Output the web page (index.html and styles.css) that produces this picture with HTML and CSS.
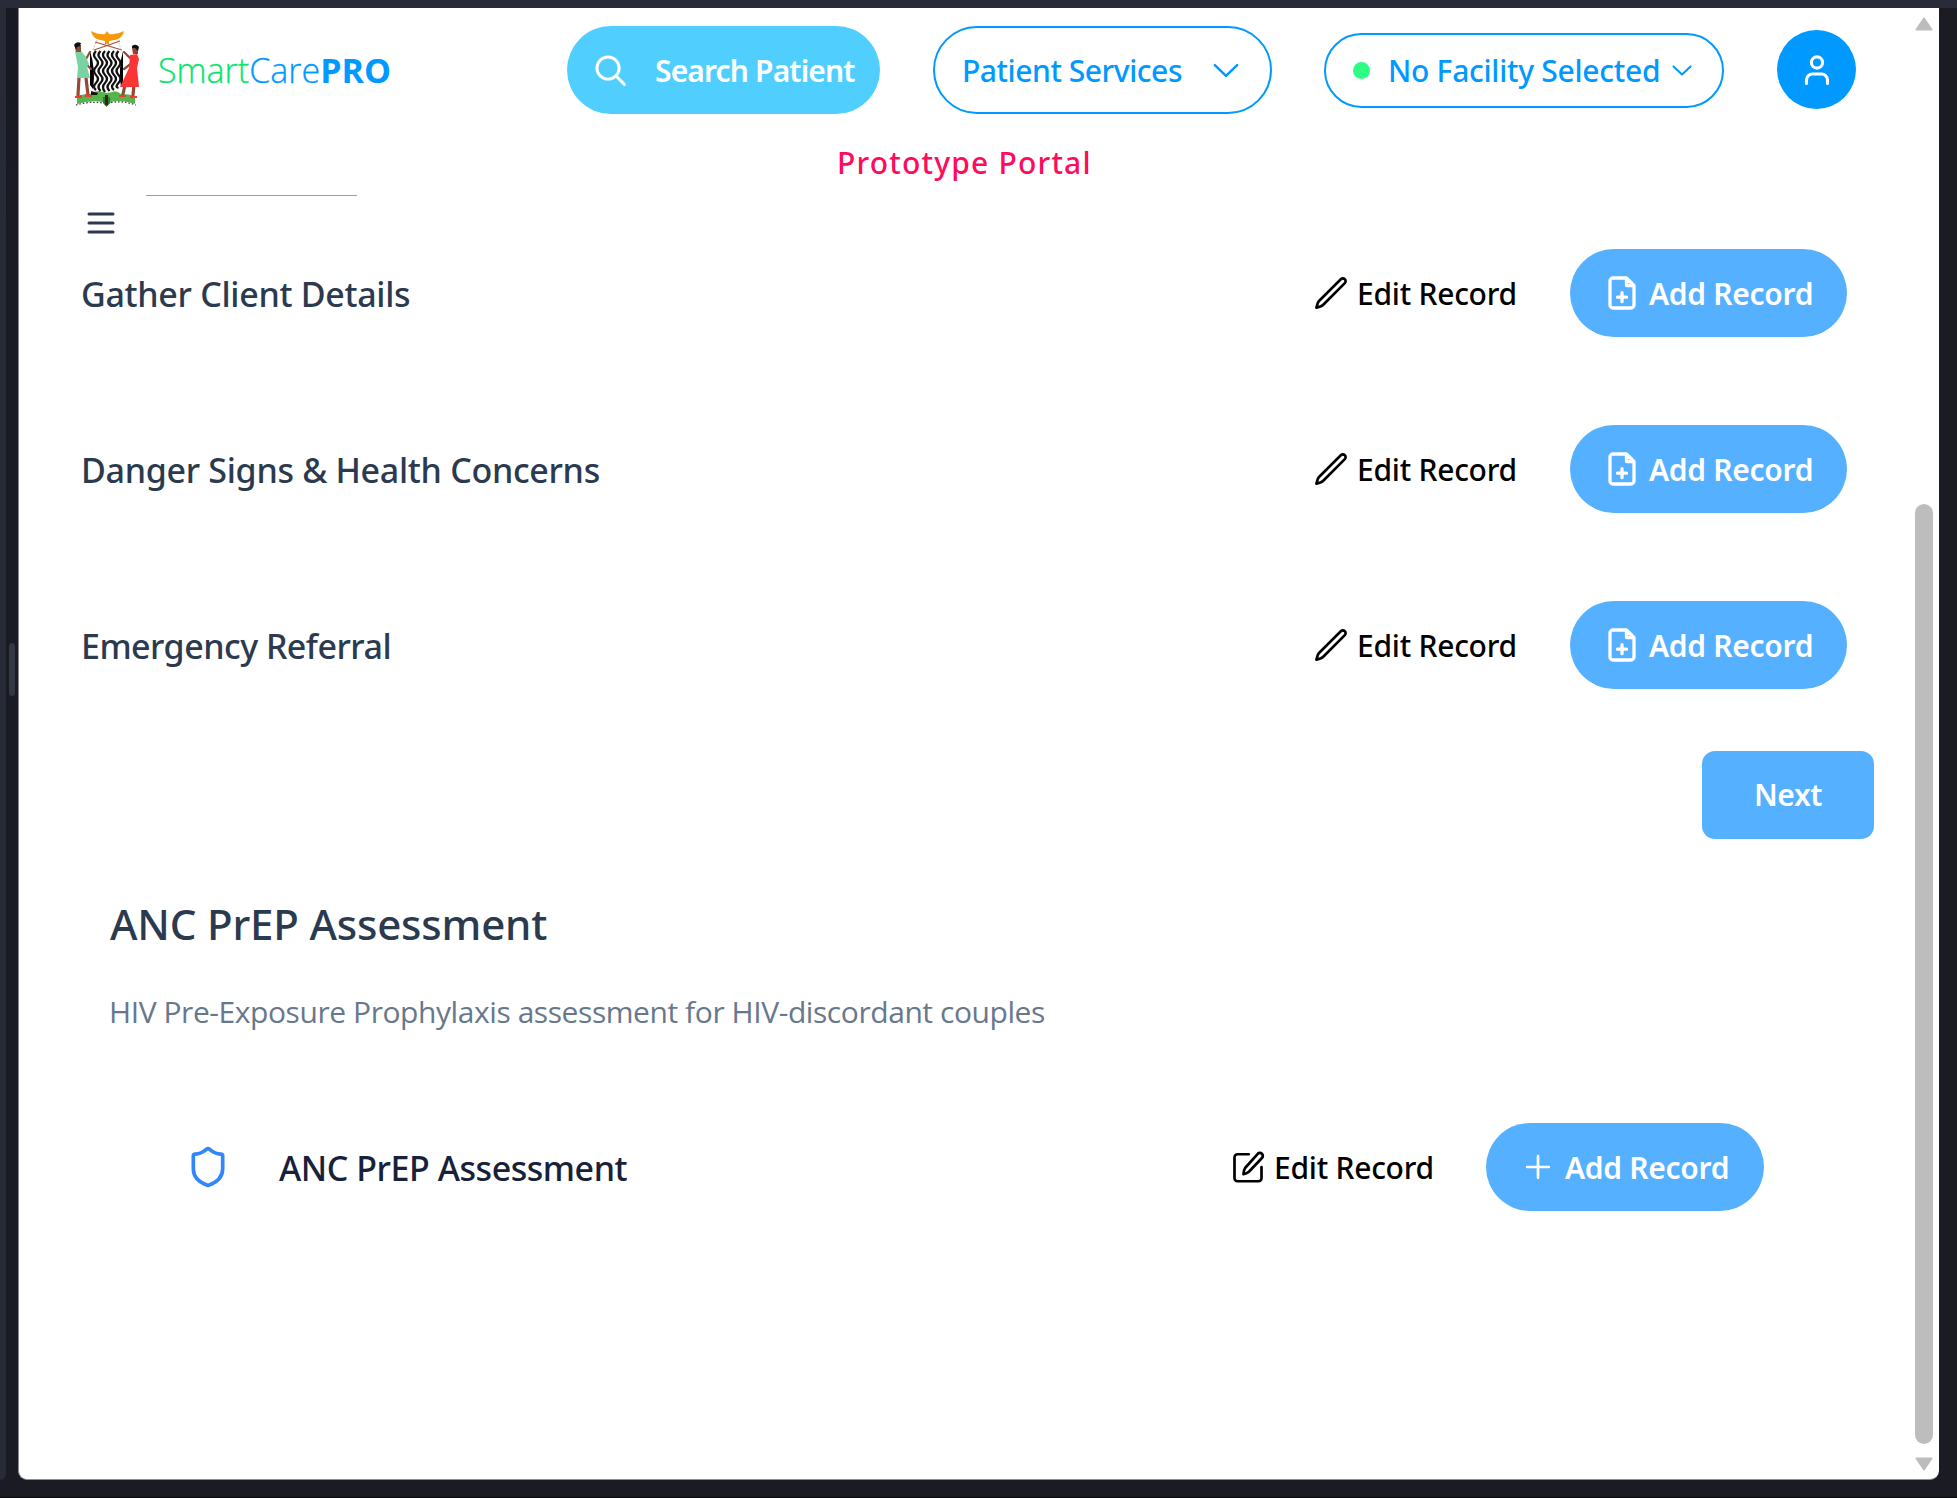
FILE: index.html
```
<!DOCTYPE html>
<html lang="en">
<head>
<meta charset="utf-8">
<title>SmartCarePRO</title>
<link rel="stylesheet" href="styles.css">
</head>
<body>
<svg class="defs" aria-hidden="true">
  <symbol id="pencil" viewBox="0 0 24 24"><path d="M16.862 4.487l1.687-1.688a1.875 1.875 0 1 1 2.652 2.652L6.832 19.82a4.5 4.5 0 0 1-1.897 1.13l-2.685.8.8-2.685a4.5 4.5 0 0 1 1.13-1.897z"/></symbol>
  <symbol id="file-plus" viewBox="0 0 24 24"><path d="M15 2H6a2 2 0 0 0-2 2v16a2 2 0 0 0 2 2h12a2 2 0 0 0 2-2V7zM15 2v5h5M9 14.8h6M12 11.8v6"/></symbol>
  <symbol id="chevron" viewBox="0 0 24 16"><path d="M1.5 3l10.500 10L22.500 3"/></symbol>
</svg>
<div class="window">
  <aside class="rail"></aside>
  <div class="gutter"><span class="grip"></span></div>
  <div class="panel">
    <main class="page">
      <header class="topbar">
        <div class="brand">
          <svg class="emblem" viewBox="13 10 67 78">
            <path fill="#55b44c" d="M17 76q7-2 13-2 6-4 16-3 10-1 15 3 8 0 14 2v8q-14-4-24-2l-4 4-4-4q-13-2-26 2z"/>
            <path fill="none" stroke="#fff" stroke-width="2" d="M17 85.500q13-4 26-2M51 83q13-2 24 2"/>
            <path fill="none" stroke="#333" stroke-width="1.200" stroke-dasharray="1.500 2" d="M16 85q13-4 27-2M51 82.500q13-2 25 2.500"/>
            <path fill="#2e7d32" d="M43 77h7v6l-3.500 4-3.500-4z"/>
            <path fill="#3a2416" d="M45 75h3v10h-3z"/>
            <path fill="none" stroke="#a5523a" stroke-width="1.200" d="M35 22l27 8M60 21l-26 9"/>
            <path fill="none" stroke="#999" stroke-width=".7" stroke-dasharray="1.500 1.500" d="M61 30l-3-10M33 30l4-10"/>
            <path fill="#fff" d="M30 31h33v35q-6 6-16.500 7Q36 71 30 66z"/>
            <path d="M30 31q6 18 3 38l-3-4zM63 31q-5 18-2 36l2-3z"/>
            <g fill="none" stroke="#111" stroke-width="2.300">
              <path d="M36 31q-4 4 0 8t0 8 0 8 0 8 0 7M40.500 31q-4 4 0 8t0 8 0 8 0 8 0 8M45 31q-4 4 0 8t0 8 0 8 0 8 0 9M49.500 31q-4 4 0 8t0 8 0 8 0 8 0 8M54 31q-4 4 0 8t0 8 0 8 0 8 0 7M58.500 31q-4 4 0 8t0 8 0 8 0 8 0 5"/>
            </g>
            <path fill="#f59a0b" d="M31 11q8 4 14 3l2-3 2 3q8 1 15-3-1 7-9 9l-6 1v3h-4v-3l-5-1q-8-2-9-9z"/>
            <g fill="none" stroke="#924a35" stroke-width="3.200" stroke-linecap="round">
              <path d="M19 58l-1 17M26 58l2 17M65 65l-2 9M74 65l-1 10"/>
              <path stroke-width="2.200" d="M24 42l7 7M26 39l4-7M72 43l-8 6M70 38l-6-6"/>
            </g>
            <path fill="#78d2a4" d="M15 31h6l5 6 3 7-2 3 3 11H17l1-11z"/>
            <path fill="#fb3434" d="M70 35l7-1 2 5-2 9 2 19H60l9-19zM15 76l7-1v3h-7zM25 74l7 1v2h-7zM59 75h7v2h-7zM70 76h7v2h-7z"/>
            <path fill="#8b4935" d="M15 25h6v7h-5zM72 28h6v6h-5z"/>
            <path fill="#111" d="M14 25q2-4 7-2l-1 3-3 1-1 3zM72 26q4-3 7 1l-1 4-3-3h-3zM31 71l7 2-1 2h-6z"/>
          </svg>
          <span class="name"><span class="smart">Smart</span><span class="care">Care</span><b>PRO</b></span>
        </div>
        <a class="search"><svg class="ico s35" viewBox="0 0 24 24"><circle cx="10.300" cy="10.300" r="7.600"/><path d="M16 16l5.500 5.500"/></svg><span>Search Patient</span></a>
        <a class="pill services"><span>Patient Services</span><svg class="ico chev"><use href="#chevron"/></svg></a>
        <a class="pill facility"><i class="dot"></i><span>No Facility Selected</span><svg class="ico chev-sm"><use href="#chevron"/></svg></a>
        <a class="avatar"><svg class="ico user" viewBox="0 0 26 32"><circle cx="13" cy="8.500" r="5.600"/><path d="M2.500 29.500v-3.500a6 6 0 0 1 6-6h9a6 6 0 0 1 6 6v3.500"/></svg></a>
      </header>
      <p class="prototype">Prototype Portal</p>
      <div class="tabline"></div>
      <svg class="ico s36 menu" viewBox="0 0 24 24"><path d="M4 6h16M4 12h16M4 18h16"/></svg>

      <section class="rows">
        <div class="row"><h3>Gather Client Details</h3>
          <a class="edit"><svg class="ico s36"><use href="#pencil"/></svg><span>Edit Record</span></a>
          <a class="add"><svg class="ico s36 w2"><use href="#file-plus"/></svg><span>Add Record</span></a></div>
        <div class="row"><h3>Danger Signs &amp; Health Concerns</h3>
          <a class="edit"><svg class="ico s36"><use href="#pencil"/></svg><span>Edit Record</span></a>
          <a class="add"><svg class="ico s36 w2"><use href="#file-plus"/></svg><span>Add Record</span></a></div>
        <div class="row"><h3 class="tight">Emergency Referral</h3>
          <a class="edit"><svg class="ico s36"><use href="#pencil"/></svg><span>Edit Record</span></a>
          <a class="add"><svg class="ico s36 w2"><use href="#file-plus"/></svg><span>Add Record</span></a></div>
      </section>
      <a class="next">Next</a>

      <section class="assessment">
        <h2>ANC PrEP Assessment</h2>
        <p>HIV Pre-Exposure Prophylaxis assessment for HIV-discordant couples</p>
        <div class="row inner">
          <svg class="ico shield" viewBox="0 0 24 24"><path d="M20 13c0 5-3.500 7.500-7.660 8.950a1 1 0 0 1-.67-.01C7.500 20.500 4 18 4 13V6a1 1 0 0 1 1-1c2 0 4.500-1.200 6.240-2.720a1.170 1.170 0 0 1 1.520 0C14.510 3.810 17 5 19 5a1 1 0 0 1 1 1z"/></svg>
          <h3>ANC PrEP Assessment</h3>
          <a class="edit"><svg class="ico s36 bold" viewBox="0 0 24 24"><path d="M12.500 3.500H5a2 2 0 0 0-2 2v14a2 2 0 0 0 2 2h14a2 2 0 0 0 2-2V12M18.500 3.200a1.950 1.950 0 0 1 2.800 2.800l-8.700 9.200q-1.500 1.300-3.600 1.500-.1-2.300 1.200-4.200z"/></svg><span>Edit Record</span></a>
          <a class="add"><svg class="ico s36 bold" viewBox="0 0 24 24"><path d="M12 4.800v14.400M4.800 12h14.400"/></svg><span>Add Record</span></a>
        </div>
      </section>
    </main>
    <div class="scrollbar">
      <svg class="arrow" viewBox="0 0 18 14"><path d="M9 1.500L16.500 12.500h-15z"/></svg>
      <div class="thumb"></div>
      <svg class="arrow" viewBox="0 0 18 14"><path d="M9 12.500L16.500 1.500h-15z"/></svg>
    </div>
  </div>
</div>
</body>
</html>
```
FILE: styles.css
```
* { box-sizing: border-box; }
body { margin: 0; background: #1b1b24; font-family: "Noto Sans", "Segoe UI", sans-serif; }
h2, h3, p { margin: 0; font-weight: 500; }
span, h2, h3, p { white-space: nowrap; }
.defs { display: none; }

.window { display: flex; height: 1498px; padding-bottom: 17px; border-top: 8px solid #2a2b38; border-bottom: 1px solid #08080c; }
.rail { width: 6px; background: #272a37; border-radius: 0 0 8px 0; }
.gutter { width: 12px; display: flex; padding: 635px 0 0 3px; background: linear-gradient(#171a22, #1b1b24 260px); }
.grip { width: 6px; height: 53px; border-radius: 3px; background: #343744; }
.panel { width: 1921px; display: flex; background: #fff; border-left: 1px solid #8c8c92; border-bottom: 1px solid #8c8c92; border-radius: 0 0 9px 9px; }
.page { width: 1896px; display: flex; flex-direction: column; }

.ico { flex: none; fill: none; stroke: currentColor; stroke-width: 1.75; stroke-linecap: round; stroke-linejoin: round; }
.s35 { width: 35px; height: 35px; stroke-width: 2; }
.s36 { width: 36px; height: 36px; }
.w2 { stroke-width: 2.2; }
.bold { stroke-width: 1.8; }

.topbar { display: flex; align-items: center; height: 88px; margin: 18px 0 0 54px; color: #0099ff; font-size: 30px; font-weight: 500; }
.brand { width: 494px; display: flex; align-items: center; }
.emblem { width: 67px; height: 78px; margin-top: -2px; }
.name { margin-left: 18px; font: 300 34px "Open Sans", sans-serif; line-height: 46px; -webkit-text-stroke: 0.3px; }
.name b { font-weight: 700; -webkit-text-stroke: 0; }
.smart { color: #08e56d; }
.search { width: 313px; height: 88px; display: flex; align-items: center; gap: 27px; padding-left: 26px; border-radius: 44px; background: #50cfff; color: #fff; font-weight: 600; letter-spacing: -0.85px; }
.pill { display: flex; align-items: center; border: 2px solid #0099ff; border-radius: 44px; }
.services { width: 339px; height: 88px; margin-left: 53px; padding-left: 27px; letter-spacing: -0.45px; }
.services span { width: 223px; }
.chev { width: 26px; height: 17px; margin-left: 28px; stroke-width: 2.4; }
.facility { width: 400px; height: 75px; margin-left: 52px; padding-left: 27px; letter-spacing: -0.27px; }
.dot { width: 17px; height: 17px; border-radius: 50%; background: #2dfd84; }
.facility span { margin-left: 18px; width: 275px; }
.chev-sm { width: 20px; height: 13px; margin-left: 9px; stroke-width: 2.5; }
.avatar { width: 79px; height: 79px; margin: -1px 0 0 53px; display: flex; align-items: center; justify-content: center; border-radius: 50%; background: #0099ff; color: #fff; }
.user { width: 26px; height: 32px; stroke-width: 3.1; }

.prototype { margin: 28px 0 0 818px; color: #ff0a5c; font-size: 30px; line-height: 42px; letter-spacing: 1.2px; }
.tabline { width: 211px; height: 1px; margin: 11px 0 0 127px; background: #55b0ff; }
.menu { margin: 9px 0 0 64px; color: #2c3a50; stroke-width: 2; }

.rows { display: flex; flex-direction: column; gap: 88px; margin: 8px 68px 0 62px; }
.row { display: flex; align-items: center; height: 88px; }
.row h3 { flex: 1; padding-top: 2px; color: #2b3a4e; font-size: 34px; line-height: 48px; letter-spacing: -0.3px; }
.row .tight { letter-spacing: -0.52px; }
.edit { width: 257px; display: flex; align-items: center; gap: 8px; color: #000; font-size: 30px; font-weight: 500; letter-spacing: -0.25px; }
.add { width: 277px; height: 88px; display: flex; align-items: center; gap: 9px; padding-left: 34px; border-radius: 44px; background: #55b0ff; color: #fff; font-size: 30px; font-weight: 600; letter-spacing: -0.3px; }
.next { align-self: flex-end; width: 172px; height: 88px; margin: 62px 41px 0 0; border-radius: 13px; background: #55b0ff; color: #fff; font-size: 30px; font-weight: 600; line-height: 88px; text-align: center; letter-spacing: -0.4px; }

.assessment { margin: 55px 151px 0 91px; }
.assessment h2 { color: #2b3a4e; font-size: 42px; line-height: 60px; letter-spacing: -0.18px; }
.assessment p { margin: 37px 0 0 -1px; color: #68788c; font: 400 30px "Open Sans", sans-serif; line-height: 42px; letter-spacing: -0.43px; }
.inner { margin: 90px 0 0 76px; }
.inner h3 { margin-left: 49px; color: #17213a; letter-spacing: -0.45px; }
.inner .edit { width: 256px; }
.inner .add { width: 278px; }
.shield { width: 44px; height: 44px; stroke-width: 2; color: #2f86ff; }

.scrollbar { width: 18px; display: flex; flex-direction: column; align-items: center; padding-top: 9px; }
.arrow { width: 18px; height: 14px; fill: #bdbdbd; stroke: #bdbdbd; stroke-width: 2; stroke-linejoin: round; }
.thumb { width: 18px; height: 940px; margin: 473px 0 13px; border-radius: 9px; background: #bdbdbd; }
```
